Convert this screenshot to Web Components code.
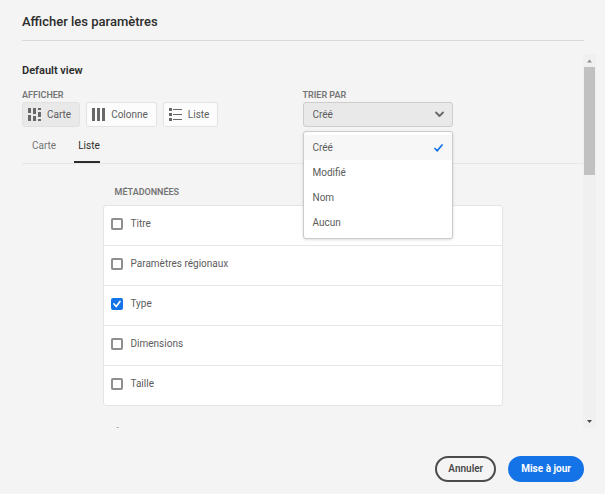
<!DOCTYPE html>
<html lang="fr">
<head>
<meta charset="utf-8">
<title>Afficher les paramètres</title>
<style>
html,body{height:100%}
body{margin:0;background:#f4f4f4;color:#5c5c5c;font:10px/16px Roboto,"Noto Sans",sans-serif}
check-list + check-list{margin-top:20px}
</style>
</head>
<body>
<settings-dialog heading="Afficher les paramètres">
  <section-heading>Default view</section-heading>
  <split-row>
    <field-group label="Afficher">
      <view-button icon="card" selected>Carte</view-button>
      <view-button icon="column">Colonne</view-button>
      <view-button icon="list">Liste</view-button>
    </field-group>
    <sort-select label="Trier par" options="Créé,Modifié,Nom,Aucun"></sort-select>
  </split-row>
  <view-tabs tabs="Carte,Liste" active="Liste"></view-tabs>
  <check-list label="Métadonnées">
    <check-row>Titre</check-row>
    <check-row>Paramètres régionaux</check-row>
    <check-row checked>Type</check-row>
    <check-row>Dimensions</check-row>
    <check-row>Taille</check-row>
  </check-list>
  <check-list label="État"></check-list>
  <pill-button slot="actions">Annuler</pill-button>
  <pill-button slot="actions" primary>Mise à jour</pill-button>
</settings-dialog>

<script>
const BASE = `:host,*{box-sizing:border-box}button,select,input{font:inherit;color:inherit;margin:0}
.label{font-size:9px;line-height:12px;font-weight:600;text-transform:uppercase;color:#747474}`;

function define(name, render) {
  customElements.define(name, class extends HTMLElement {
    connectedCallback() {
      if (this.shadowRoot) return;
      const root = this.attachShadow({ mode: 'open' });
      const t = document.createElement('template');
      t.innerHTML = render(this).replace('<style>', '<style>' + BASE);
      root.append(t.content.cloneNode(true));
    }
  });
}

define('settings-dialog', el => `<style>
:host{display:flex;flex-direction:column;height:100%;padding:0 21px 12px 22px}
header{padding:13px 0 9px;border-bottom:1px solid #d9d9d9}
h1{margin:0;font-size:13px;line-height:18px;font-weight:500;color:#2c2c2c}
main{flex:1;min-height:0;display:flex;margin:13px -12px 0 0}
.content{flex:1;min-width:0;overflow:hidden;padding-top:9px}
footer{display:flex;justify-content:flex-end;gap:12px;padding-top:28px}
</style>
<header><h1>${el.getAttribute('heading')}</h1></header>
<main><div class="content"><slot></slot></div><scroll-track></scroll-track></main>
<footer><slot name="actions"></slot></footer>`);

define('scroll-track', () => `<style>
:host{display:flex;flex-direction:column;align-items:center;width:13px;background:#f0f0f0}
svg{display:block;width:13px;height:13px;flex:none}
.track{flex:1;width:11px}
.thumb{height:31%;background:#c1c1c1}
</style>
<svg viewBox="0 0 13 13"><path d="M4 8.500h5L6.500 5.500z" fill="#8f8f8f"/></svg>
<div class="track"><div class="thumb"></div></div>
<svg viewBox="0 0 13 13"><path d="M4 5h5L6.500 8z" fill="#4b4b4b"/></svg>`);

define('section-heading', () => `<style>
:host{display:block}
h2{margin:0;font-size:11px;line-height:16px;font-weight:600;color:#2c2c2c}
</style><h2><slot></slot></h2>`);

define('split-row', () => `<style>
:host{display:grid;grid-template-columns:1fr 1fr;margin-top:10px}
</style><slot></slot>`);

define('field-group', el => `<style>
:host{display:block}
.items{display:flex;gap:6px;margin-top:1px}
</style><div class="label">${el.getAttribute('label')}</div>
<div class="items" role="group" aria-label="${el.getAttribute('label')}"><slot></slot></div>`);

const VIEW_ICONS = {
  card: '<path d="M0 0h3v5H0zM0 7h3v6H0zM5 0h3v6H5zM5 8h3v5H5zM10 0h3v2h-3zM10 4h3v5h-3zM10 11h3v2h-3z"/>',
  column: '<path d="M0 0h3v13H0zM5 0h3v13H5zM10 0h3v13h-3z"/>',
  list: '<path d="M0 0h3v3H0zM4 1h9v1H4zM0 5h3v3H0zM4 6h9v1H4zM0 10h3v3H0zM4 11h9v1H4z"/>'
};
define('view-button', el => `<style>
:host{display:block}
button{display:flex;align-items:center;gap:6px;height:25px;padding:0 8px 0 5px;border:1px solid #e3e3e3;border-radius:3px;background:#fcfcfc;white-space:nowrap;color:#5c5c5c}
button[aria-pressed=true]{background:#e9e9e9;border-color:#e1e1e1}
svg{width:13px;height:13px;fill:#686868}
</style><button type="button" aria-pressed="${el.hasAttribute('selected')}">
<svg viewBox="0 0 13 13" aria-hidden="true">${VIEW_ICONS[el.getAttribute('icon')]}</svg><slot></slot></button>`);

define('sort-select', el => {
  const opts = el.getAttribute('options').split(',');
  return `<style>
:host{display:block;position:relative;width:150px}
.box{display:grid;align-items:center;margin-top:1px}
select{grid-area:1/1;appearance:none;width:100%;height:25px;padding:0 9px;border:1px solid #cdcdcd;border-radius:3px;background:#e9e9e9;color:#5c5c5c}
.box svg{grid-area:1/1;justify-self:end;margin-right:9px;width:9px;height:7px;pointer-events:none}
ul{position:absolute;z-index:1;top:100%;left:0;right:0;margin:4px 0 0;padding:3px 0;list-style:none;border:1px solid #cbcbcb;border-radius:3px;background:#fff;box-shadow:0 1px 3px #0002}
li{display:flex;align-items:center;justify-content:space-between;height:25px;padding:0 9px;color:#5c5c5c}
li[aria-selected=true]{background:#f7f7f7}
li svg{width:9px;height:9px}
</style>
<label class="label" for="s" style="display:block">${el.getAttribute('label')}</label>
<div class="box"><select id="s">${opts.map(o => `<option>${o}</option>`).join('')}</select>
<svg viewBox="0 0 9 7" aria-hidden="true"><path d="M1 1.500l3.500 3.500L8 1.500" fill="none" stroke="#686868" stroke-width="1.800" stroke-linecap="round" stroke-linejoin="round"/></svg></div>
<ul role="listbox" aria-label="${el.getAttribute('label')}">${opts.map((o, i) => `<li role="option" aria-selected="${i === 0}">${o}${i === 0 ? '<svg viewBox="0 0 9 9" aria-hidden="true"><path d="M1 5.500l2.300 2.300L8 2" fill="none" stroke="#1473e6" stroke-width="1.700" stroke-linecap="round" stroke-linejoin="round"/></svg>' : ''}</li>`).join('')}</ul>`;
});

define('view-tabs', el => `<style>
:host{display:flex;gap:22px;padding-left:10px;border-bottom:1px solid #e6e6e6;margin-top:8px}
button{height:28px;padding:3px 0 10px;border:0;background:none;line-height:15px;color:#747474}
button[aria-selected=true]{color:#2c2c2c;border-bottom:2px solid #2c2c2c;padding:3px 0 8px 4px;margin:0 0 -1px -4px}
</style>${el.getAttribute('tabs').split(',').map(t => `<button type="button" role="tab" aria-selected="${t === el.getAttribute('active')}">${t}</button>`).join('')}`);

define('check-list', el => `<style>
:host{display:block;max-width:400px;margin:22px auto 0}
.label{padding:0 12px}
.rows{margin-top:7px;border:1px solid #e4e4e4;border-radius:3px;background:#fff;overflow:hidden}
::slotted(:not(:first-child)){border-top:1px solid #e6e6e6}
</style><div class="label">${el.getAttribute('label')}</div>
<div class="rows" role="group" aria-label="${el.getAttribute('label')}"><slot></slot></div>`);

define('check-row', el => `<style>
:host{display:block}
label{display:flex;align-items:center;gap:8px;height:39px;padding:0 7px 3px;color:#5c5c5c}
input{appearance:none;display:block;width:12px;height:12px;border:2px solid #8e8e8e;border-radius:2px;background:#fff}
input:checked{border-color:#1473e6;background:#1473e6}
.tick{display:grid}
.tick>*{grid-area:1/1}
svg{width:12px;height:12px;pointer-events:none;visibility:hidden}
input:checked+svg{visibility:visible}
</style><label><span class="tick"><input type="checkbox"${el.hasAttribute('checked') ? ' checked' : ''}><svg viewBox="0 0 12 12" aria-hidden="true"><path d="M3 6l2.200 2.500L9 3.500" fill="none" stroke="#fff" stroke-width="1.700" stroke-linecap="round" stroke-linejoin="round"/></svg></span><slot></slot></label>`);

define('pill-button', el => `<style>
:host{display:block}
button{height:26px;padding:0 11px;border:2px solid #4b4b4b;border-radius:13px;background:none;color:#4b4b4b;font-weight:600;white-space:nowrap}
:host([primary]) button{background:#1473e6;border-color:#1473e6;color:#fff;font-weight:700}
</style><button type="button"><slot></slot></button>`);
</script>
</body>
</html>
